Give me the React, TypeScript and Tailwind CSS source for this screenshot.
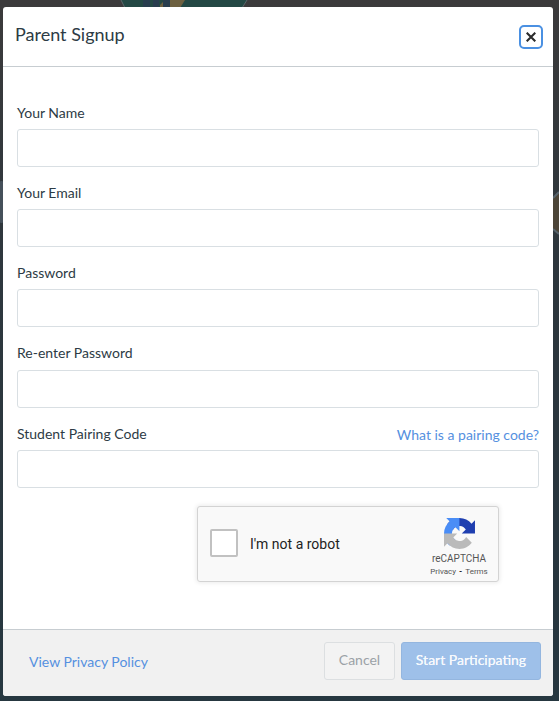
import React from "react";

type FieldProps = { label: string; type?: string; labelClass?: string; link?: string };

function Field({ label, type = "text", labelClass = "h-[26px]", link }: FieldProps) {
  return (
    <label className="block">
      <span className={`flex justify-between text-[14px] leading-5 ${labelClass}`}>
        <span>{label}</span>
        {link && <a className="relative top-px text-[#5590e0]">{link}</a>}
      </span>
      <input
        type={type}
        className="block h-[38px] w-full rounded-[3px] border border-[#d9dfe3] bg-white px-3 outline-none"
      />
    </label>
  );
}

function Backdrop() {
  return (
    <svg className="absolute inset-0" width="559" height="701" viewBox="0 0 559 701" aria-hidden="true">
      <defs>
        <linearGradient id="shade" x1="0" y1="0" x2="0" y2="1">
          <stop offset="0" stopColor="#3b3a3b" />
          <stop offset="0.35" stopColor="#2e373d" />
          <stop offset="1" stopColor="#263740" />
        </linearGradient>
      </defs>
      <rect width="559" height="701" fill="url(#shade)" />
      <path d="M121 0h126l-5 8H125z" fill="#234844" />
      <path d="M121 0l4 8M247 0l-5 8" stroke="#59666a" />
      <path d="M160 5l5-5h20l-5 8h-20z" fill="#6d6040" />
      <path d="M143 0h7v8h-7zM153 0h6v8h-6zM163 0h7v8h-7z" fill="#283d4e" />
      <rect y="181" width="3" height="42" rx="1" fill="#45505a" />
      <path d="M553 198l6-6v42l-6-5z" fill="#4c4538" />
      <path d="M553 198l6-6M553 229l6 5" stroke="#56636b" strokeWidth="2" />
    </svg>
  );
}

function RecaptchaLogo() {
  return (
    <svg className="block" width="31" height="31" viewBox="0 0 64 64" aria-hidden="true">
      <path
        fill="#1f3fb0"
        d="M64 31.955l-.033-1.37V4.687l-7.16 7.16C50.948 4.674 42.033.093 32.05.093c-10.4 0-19.622 4.96-25.458 12.64l11.736 11.86a15.55 15.55 0 0 1 4.754-5.334c2.05-1.6 4.952-2.906 8.968-2.906.485 0 .86.057 1.135.163 4.976.393 9.288 3.14 11.828 7.124l-8.307 8.307L64 31.953"
      />
      <path
        fill="#4a8df6"
        d="M31.862.094l-1.37.033H4.594l7.16 7.16C4.58 13.147 0 22.06 0 32.046c0 10.4 4.96 19.622 12.64 25.458L24.5 45.768a15.55 15.55 0 0 1-5.334-4.754c-1.6-2.05-2.906-4.952-2.906-8.968 0-.485.057-.86.163-1.135.393-4.976 3.14-9.288 7.124-11.828l8.307 8.307L31.86.095"
      />
      <path
        fill="#bababa"
        d="M.001 32.045l.033 1.37v25.898l7.16-7.16c5.86 7.173 14.774 11.754 24.76 11.754 10.4 0 19.622-4.96 25.458-12.64l-11.736-11.86a15.55 15.55 0 0 1-4.754 5.334c-2.05 1.6-4.952 2.906-8.968 2.906-.485 0-.86-.057-1.135-.163-4.976-.393-9.288-3.14-11.828-7.124l8.307-8.307c-10.522.04-22.4.066-27.295-.005"
      />
    </svg>
  );
}

function Recaptcha() {
  return (
    <div className="ml-[180px] mt-[18px] flex h-[76px] w-[302px] rounded-[3px] border border-[#d3d3d3] bg-[#f9f9f9] font-['Roboto',sans-serif] shadow-[0_0_4px_1px_rgba(0,0,0,0.08)]">
      <div className="ml-3 mt-[22px] size-7 shrink-0 rounded-[2px] border-2 border-[#c1c1c1] bg-white" />
      <div className="ml-3 mt-[29px] grow whitespace-nowrap text-[14px] leading-[17px] text-[#222]">I'm not a robot</div>
      <div className="mr-[9px] flex w-[60px] flex-col items-center pt-[11px] text-[#555]">
        <RecaptchaLogo />
        <div className="mt-[5px] text-[10px] leading-[10px]">reCAPTCHA</div>
        <div className="mt-[3px] whitespace-nowrap text-[8px] leading-[10px]">
          Privacy<span className="px-[3px] font-bold text-black">-</span>Terms
        </div>
      </div>
    </div>
  );
}

export default function App() {
  return (
    <div className="relative h-[701px] w-[559px] overflow-hidden font-['Lato',sans-serif] text-[#2d3b45]">
      <Backdrop />
      <div className="relative ml-[3px] mt-[7px] flex h-[689px] w-[550px] flex-col overflow-hidden rounded-[3px] bg-white">
        <header className="flex h-[60px] shrink-0 items-start justify-between border-b border-[#c7cdd1] pl-3 pr-[10px]">
          <h1 className="mt-[14px] text-[18px] leading-[26px]">Parent Signup</h1>
          <button
            aria-label="Close"
            className="mt-[18px] flex size-6 items-center justify-center rounded-[5px] border-2 border-[#4a90e2]"
          >
            <svg width="10" height="10" viewBox="0 0 10 10" stroke="#2b2b2b" strokeWidth="2.1">
              <path d="M.7.7l8.6 8.6M9.3.7L.7 9.3" />
            </svg>
          </button>
        </header>
        <form className="grow px-[14px] pt-9">
          <div className="flex flex-col gap-4">
            <Field label="Your Name" />
            <Field label="Your Email" />
            <Field label="Password" type="password" />
            <Field label="Re-enter Password" type="password" labelClass="h-[27px]" />
            <Field label="Student Pairing Code" link="What is a pairing code?" />
          </div>
          <Recaptcha />
        </form>
        <footer className="flex h-[67px] shrink-0 items-start border-t border-[#c7cdd1] bg-[#f1f1f1] pl-[26px] pr-3 pt-3 text-[14px]">
          <a className="mt-[10px] grow leading-5 text-[#5590e0]">View Privacy Policy</a>
          <button className="h-[38px] w-[71px] rounded-[3px] border border-[#dcdfe1] bg-[#f3f3f3] pb-1 text-[#9ba2a7]">
            Cancel
          </button>
          <button className="ml-[6px] h-[38px] w-[140px] whitespace-nowrap rounded-[3px] border border-[#94b6df] bg-[#9ec0e9] pb-1 text-[#f6f9fd] [text-shadow:0_0_0.5px_#fff]">
            Start Participating
          </button>
        </footer>
      </div>
    </div>
  );
}
